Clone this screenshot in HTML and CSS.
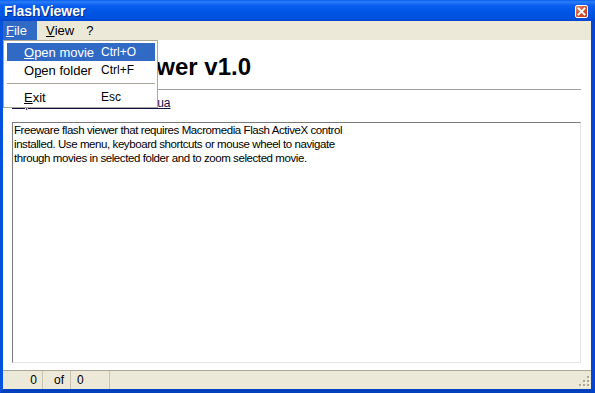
FILE: index.html
```html
<!DOCTYPE html>
<html lang="en">
<head>
  <meta charset="UTF-8">
  <title>FlashViewer</title>
  <link rel="stylesheet" href="styles.css">
</head>
<body>
  <div class="window">
    <div class="titlebar">
      <span class="title">FlashViewer</span>
      <span class="close-btn">
        <svg width="9" height="9" viewBox="0 0 9 9">
          <path d="M1.5 1.5 L7.5 7.5 M7.5 1.5 L1.5 7.5" stroke="#fff" stroke-width="1.8" stroke-linecap="square"/>
        </svg>
      </span>
    </div>
    <div class="frame">
      <div class="menubar">
        <span class="menu-item active"><u>F</u>ile</span>
        <span class="menu-item"><u>V</u>iew</span>
        <span class="menu-item">?</span>
      </div>

      <div class="client">
        <h1 class="heading">FlashViewer v1.0</h1>
        <div class="rule"></div>
        <p class="link-line"><a href="#">http://www.flashviewer.kiev.ua</a></p>
        <div class="memo">
          Freeware flash viewer that requires Macromedia Flash ActiveX control<br>
          installed. Use menu, keyboard shortcuts or mouse wheel to navigate<br>
          through movies in selected folder and to zoom selected movie.
        </div>
      </div>

      <div class="statusbar">
        <span class="panel panel-num">0</span>
        <span class="panel panel-of">of</span>
        <span class="panel panel-total">0</span>
        <span class="panel panel-rest"></span>
        <span class="grip">
          <svg width="11" height="11" viewBox="0 0 11 11">
            <g fill="#aca899">
              <rect x="8" y="0" width="2" height="2"/>
              <rect x="4" y="4" width="2" height="2"/>
              <rect x="8" y="4" width="2" height="2"/>
              <rect x="0" y="8" width="2" height="2"/>
              <rect x="4" y="8" width="2" height="2"/>
              <rect x="8" y="8" width="2" height="2"/>
            </g>
            <g fill="#fff">
              <rect x="10" y="2" width="1" height="1"/>
              <rect x="6" y="6" width="1" height="1"/>
              <rect x="10" y="6" width="1" height="1"/>
              <rect x="2" y="10" width="1" height="1"/>
              <rect x="6" y="10" width="1" height="1"/>
              <rect x="10" y="10" width="1" height="1"/>
            </g>
          </svg>
        </span>
      </div>

      <!-- open File menu -->
      <div class="dropdown">
        <div class="drop-item selected"><span class="drop-label"><u>O</u>pen movie</span><span class="drop-key">Ctrl+O</span></div>
        <div class="drop-item"><span class="drop-label">O<u>p</u>en folder</span><span class="drop-key">Ctrl+F</span></div>
        <div class="drop-sep"></div>
        <div class="drop-item"><span class="drop-label"><u>E</u>xit</span><span class="drop-key">Esc</span></div>
      </div>
    </div>
  </div>
</body>
</html>
```

FILE: styles.css
```css
* {
  margin: 0;
  padding: 0;
  box-sizing: border-box;
}

body {
  font-family: 'Liberation Sans', Arial, sans-serif;
  font-size: 12px;
  color: #000;
  background: #0054e3;
  width: 595px;
  height: 393px;
  overflow: hidden;
}

.window {
  display: flex;
  flex-direction: column;
  height: 393px;
}

.titlebar {
  height: 21px;
  flex-shrink: 0;
  display: flex;
  align-items: center;
  justify-content: space-between;
  padding: 0 7px 0 4px;
  background: linear-gradient(to bottom, #0a62f0 0%, #2a7cf8 10%, #0a5ff0 25%, #0055e5 60%, #0050de 85%, #0046d0 100%);
}

.title {
  color: #fff;
  font-weight: bold;
  font-size: 14px;
  text-shadow: 1px 1px 0 #0a2a8a;
  margin-top: 1px;
}

.close-btn {
  width: 13px;
  height: 13px;
  margin-top: 2px;
  border: 1px solid #fff;
  border-radius: 2px;
  background: linear-gradient(135deg, #e98c6e 0%, #d9532e 50%, #c0401f 100%);
  display: flex;
  align-items: center;
  justify-content: center;
}

.frame {
  flex: 1;
  display: flex;
  flex-direction: column;
  position: relative;
  border-left: 3px solid #0552df;
  border-right: 4px solid #0547d2;
  border-bottom: 4px solid #0340bd;
  background: #fff;
}

.menubar {
  height: 19px;
  flex-shrink: 0;
  display: flex;
  align-items: stretch;
  background: #ece9d8;
  font-size: 13px;
}

.menu-item {
  display: flex;
  align-items: center;
  padding: 0 6px 0 3px;
  margin-right: 3px;
}

.menu-item:nth-child(2) {
  padding-left: 6px;
}

.menu-item.active {
  background: #316ac5;
  color: #fff;
  width: 34px;
}

.client {
  flex: 1;
  padding: 13px 9px 0 9px;
  display: flex;
  flex-direction: column;
}

.heading {
  font-size: 24px;
  font-weight: bold;
  line-height: 28px;
  margin-left: 46px;
  margin-bottom: 8px;
}

.rule {
  height: 1px;
  background: #a0a0a0;
  margin-right: 1px;
}

.link-line {
  margin-top: 6px;
  line-height: 15px;
  height: 16px;
}

.link-line a {
  color: #10104a;
  text-decoration: underline;
}

.memo {
  margin-top: 10px;
  height: 241px;
  margin-right: 1px;
  padding: 0 2px 0 1px;
  font-size: 11.5px;
  letter-spacing: -0.42px;
  line-height: 14px;
  border-top: 1px solid #7a7a7a;
  border-left: 1px solid #7a7a7a;
  border-right: 1px solid #e4e4e4;
  border-bottom: 1px solid #e4e4e4;
}

.statusbar {
  height: 19px;
  flex-shrink: 0;
  margin-top: 7px;
  display: flex;
  align-items: stretch;
  background: #ece9d8;
  border-top: 1px solid #aca899;
}

.panel {
  display: flex;
  align-items: center;
  border-right: 1px solid #c9c5b3;
}

.panel-num {
  width: 40px;
  justify-content: flex-end;
  padding-right: 5px;
}

.panel-of {
  width: 28px;
  padding-left: 11px;
}

.panel-total {
  width: 39px;
  padding-left: 6px;
}

.panel-rest {
  flex: 1;
  border-right: none;
}

.grip {
  display: flex;
  align-items: flex-end;
  padding: 0 1px 2px 0;
}

.dropdown {
  position: absolute;
  left: 0;
  top: 19px;
  width: 155px;
  padding: 2px 2px 1px 3px;
  background: #fff;
  border: 1px solid #aca899;
}

.drop-item {
  display: flex;
  height: 18px;
  align-items: center;
  padding-left: 17px;
  font-size: 13px;
}

.drop-item.selected {
  background: #316ac5;
  color: #fff;
}

.drop-label {
  width: 77px;
}

.drop-key {
  font-size: 12px;
}

.drop-sep {
  height: 1px;
  background: #aca899;
  margin: 4px 0 4px 0;
}
```
